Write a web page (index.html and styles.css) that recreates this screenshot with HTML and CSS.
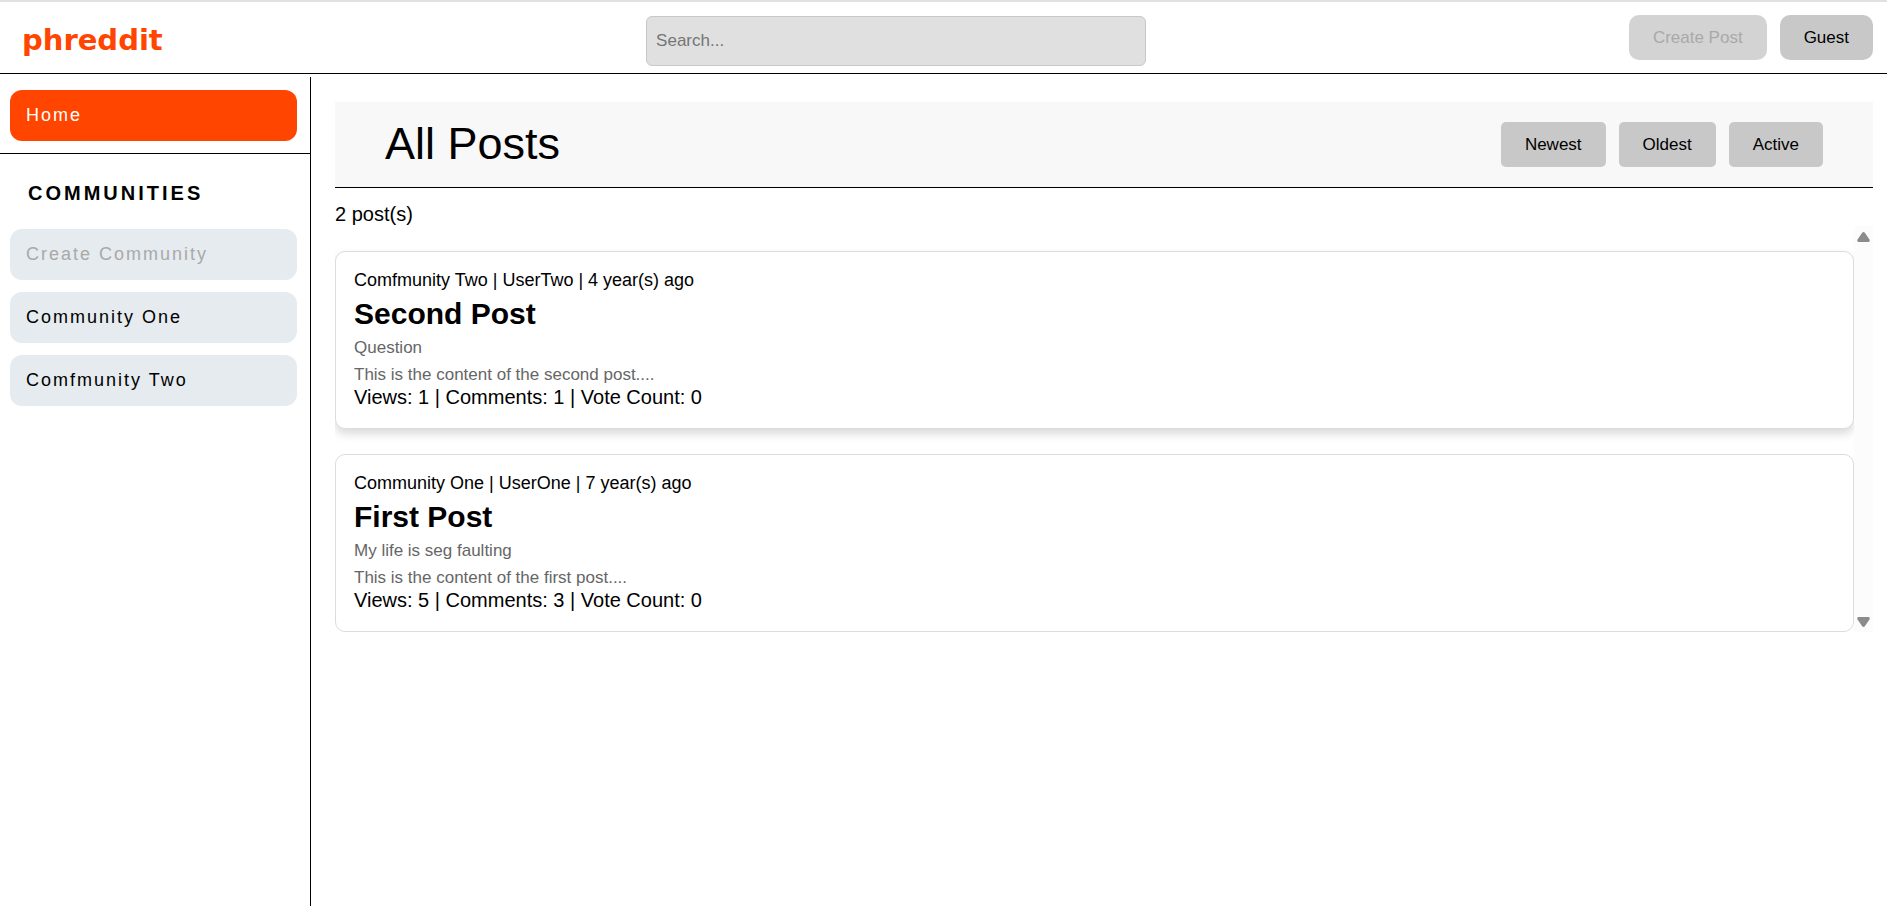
FILE: index.html
```html
<!DOCTYPE html>
<html lang="en">
<head>
<meta charset="utf-8">
<title>phreddit</title>
<link rel="stylesheet" href="styles.css">
</head>
<body>
<header class="banner">
  <a class="logo" href="#">phreddit</a>
  <input class="search" type="search" placeholder="Search..." aria-label="Search">
  <div class="account">
    <button class="btn btn-round" type="button" disabled>Create Post</button>
    <button class="btn btn-round" type="button">Guest</button>
  </div>
</header>
<div class="layout">
  <nav class="sidebar">
    <div class="home-row">
      <button class="nav-btn active" type="button">Home</button>
    </div>
    <h2 class="nav-title">COMMUNITIES</h2>
    <div class="nav-list">
      <button class="nav-btn" type="button" disabled>Create Community</button>
      <button class="nav-btn" type="button">Community One</button>
      <button class="nav-btn" type="button">Comfmunity Two</button>
    </div>
  </nav>
  <main class="content">
    <div class="content-head">
      <h1 class="page-title">All Posts</h1>
      <div class="sort">
        <button class="btn" type="button">Newest</button>
        <button class="btn" type="button">Oldest</button>
        <button class="btn" type="button">Active</button>
      </div>
    </div>
    <p class="count">2 post(s)</p>
    <div class="feed">
      <div class="posts">
        <article class="post raised">
          <p class="meta">Comfmunity Two | UserTwo | 4 year(s) ago</p>
          <h2 class="post-title">Second Post</h2>
          <p class="flair">Question</p>
          <p class="excerpt">This is the content of the second post....</p>
          <p class="stats">Views: 1 | Comments: 1 | Vote Count: 0</p>
        </article>
        <article class="post">
          <p class="meta">Community One | UserOne | 7 year(s) ago</p>
          <h2 class="post-title">First Post</h2>
          <p class="flair">My life is seg faulting</p>
          <p class="excerpt">This is the content of the first post....</p>
          <p class="stats">Views: 5 | Comments: 3 | Vote Count: 0</p>
        </article>
      </div>
      <div class="scroll-track" aria-hidden="true">
        <svg width="13" height="10" viewBox="0 0 13 10"><path d="M5.2 .8Q6.5-.7 7.8 .8L12.5 7.5Q13.3 10 11.3 10H1.7Q-.3 10 .5 7.5Z" fill="#8b8b8b"/></svg>
        <svg width="13" height="10" viewBox="0 0 13 10"><path d="M5.2 9.2Q6.5 10.7 7.8 9.2L12.5 2.5Q13.3 0 11.3 0H1.7Q-.3 0 .5 2.5Z" fill="#8b8b8b"/></svg>
      </div>
    </div>
  </main>
</div>
</body>
</html>
```

FILE: styles.css
```css
* { box-sizing: border-box; }

body {
  margin: 0;
  min-height: 100vh;
  display: flex;
  flex-direction: column;
  font-family: "Liberation Sans", Arial, sans-serif;
  font-size: 20px;
  color: #000;
  background: #fff;
}

h1, h2, p { margin: 0; }

button { font-family: inherit; border: none; }

.banner {
  display: grid;
  grid-template-columns: 8fr 500px 9fr;
  align-items: start;
  height: 74px;
  padding: 13px 14px 0 0;
  border-top: 2px solid #e1e1e1;
  border-bottom: 1px solid #000;
}

.logo {
  padding-left: 22px;
  font: bold 29px/50px "DejaVu Sans", Verdana, sans-serif;
  color: #ff4500;
  text-decoration: none;
}

.search {
  height: 50px;
  margin-top: 1px;
  padding: 0 9px;
  border: 1px solid #c8c8c8;
  border-radius: 6px;
  background: #e0e0e0;
  font-family: inherit;
  font-size: 17px;
}
.search::placeholder { color: #757575; }

.account, .sort { display: flex; gap: 13px; }
.account { justify-content: flex-end; }

.btn {
  height: 45px;
  padding: 0 24px;
  border-radius: 5px;
  background: #c8c8c8;
  color: #000;
  font-size: 17px;
}
.btn-round { border-radius: 10px; }
.btn:disabled { background: #d3d3d3; color: #a9a9a9; }

.layout { display: flex; flex: 1; margin-top: 3px; }

.sidebar {
  flex: 0 0 311px;
  border-right: 1px solid #000;
}

.home-row {
  padding: 13px 13px 12px 10px;
  border-bottom: 1px solid #000;
}

.nav-title {
  padding: 29px 28px 26px;
  font-size: 20px;
  font-weight: 900;
  line-height: 20px;
  letter-spacing: 3px;
}

.nav-list {
  display: flex;
  flex-direction: column;
  gap: 12px;
  padding: 0 13px 0 10px;
}

.nav-btn {
  width: 100%;
  height: 51px;
  padding: 0 16px;
  border-radius: 12px;
  background: #e5ebee;
  color: #000;
  font-size: 18px;
  letter-spacing: 2px;
  text-align: left;
}
.nav-btn.active { background: #ff4500; color: #fff; }
.nav-btn:disabled { color: #a9a9a9; }

.content {
  flex: 1;
  min-width: 0;
  padding: 25px 14px 0 24px;
}

.content-head {
  display: flex;
  align-items: center;
  justify-content: space-between;
  height: 86px;
  padding: 0 50px;
  background: #f8f8f8;
  border-bottom: 1px solid #000;
}

.page-title {
  padding-bottom: 2px;
  font-size: 45px;
  font-weight: normal;
}

.count { margin-top: 14px; line-height: 24px; }

.feed { display: flex; }

.posts {
  flex: 1;
  display: flex;
  flex-direction: column;
  gap: 25px;
  padding-top: 25px;
  overflow: hidden;
}

.post {
  padding: 17px 18px 19px;
  border: 1px solid #dcdcdc;
  border-radius: 10px;
  background: #fff;
}
.raised { box-shadow: 0 5px 10px rgba(0, 0, 0, 0.15); }

.meta { font-size: 18px; line-height: 22px; }
.post-title { font-size: 30px; line-height: 46px; }
.flair, .excerpt { font-size: 17px; color: #666; }
.flair { line-height: 22px; }
.excerpt { margin-top: 6px; line-height: 20px; }
.stats { line-height: 24px; }

.scroll-track {
  width: 19px;
  display: flex;
  flex-direction: column;
  align-items: center;
  justify-content: space-between;
  padding: 6px 0 5px;
  background: #fcfcfc;
}
```
